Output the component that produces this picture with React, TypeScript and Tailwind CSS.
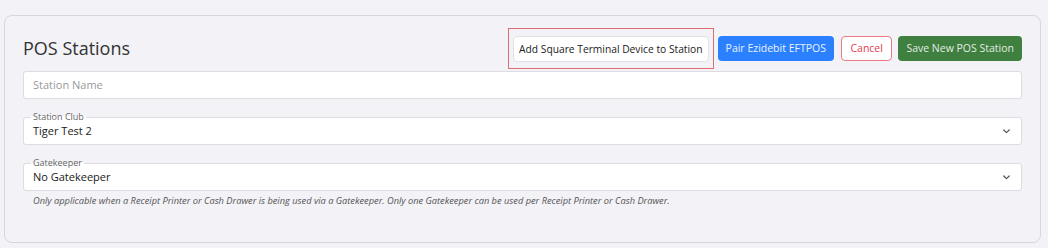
const ChevronDown = () => (
	<svg width="7" height="5" viewBox="0 0 7 5" fill="none" className="text-[#555]">
		<path d="M0.8 1l2.7 2.7L6.2 1" stroke="currentColor" strokeWidth="1.2" strokeLinecap="round" strokeLinejoin="round" />
	</svg>
);

const SelectField = ({ label, value }: { label: string; value: string }) => {
	return (
		<div className="relative">
			<span className="absolute -top-[6px] left-[8px] px-[2px] text-[9px] leading-[11px] text-[#666] bg-[linear-gradient(to_bottom,#f2f2f7_50%,#ffffff_50%)]">
				{label}
			</span>
			<div className="flex items-center justify-between h-[28px] pl-[9px] pr-[11px] bg-white border border-[#dcdce2] rounded-[3px]">
				<span className="text-[11px] text-[#1a1a1a]">{value}</span>
				<ChevronDown />
			</div>
		</div>
	);
};

const App = () => {
	return (
		<div className="w-[1048px] h-[248px] bg-[#f2f2f7] pt-[15px] pl-[4px] pr-[7px] font-['Open_Sans',sans-serif]">
			<div className="h-[228px] border border-[#d6d6dc] rounded-[8px] bg-[#f2f2f7] pl-[18px] pr-[18px]">
				<div className="flex items-center justify-between h-[55px] pt-[10px]">
					<h1 className="text-[18px] text-[#333]">POS Stations</h1>
					<div className="flex items-center">
						<div className="border border-[#e06c75] px-[4px] py-[6px]">
							<button className="h-[26px] px-[5px] text-[10.25px] text-[#222] bg-white border border-[#e2e2e6] rounded-[4px]">
								Add Square Terminal Device to Station
							</button>
						</div>
						<button className="ml-[4px] h-[25px] px-[8px] text-[10.5px] text-[#eaf2ff] bg-[#2a80ff] rounded-[4px]">
							Pair Ezidebit EFTPOS
						</button>
						<button className="ml-[7px] h-[25px] px-[8.5px] text-[10.5px] text-[#e0404e] bg-white border border-[#ec7a84] rounded-[4px]">
							Cancel
						</button>
						<button className="ml-[6px] h-[25px] px-[8px] text-[10.5px] text-[#e2ece2] bg-[#3f7f3f] rounded-[4px]">
							Save New POS Station
						</button>
					</div>
				</div>
				<div className="flex items-center h-[28px] pl-[9px] bg-white border border-[#dcdce2] rounded-[3px]">
					<span className="text-[11px] text-[#999]">Station Name</span>
				</div>
				<div className="mt-[18px]">
					<SelectField label="Station Club" value="Tiger Test 2" />
				</div>
				<div className="mt-[18px]">
					<SelectField label="Gatekeeper" value="No Gatekeeper" />
				</div>
				<p className="mt-[3px] pl-[10px] text-[9.25px] italic text-[#555]">
					Only applicable when a Receipt Printer or Cash Drawer is being used via a Gatekeeper. Only one Gatekeeper can be used per Receipt Printer or Cash Drawer.
				</p>
			</div>
		</div>
	);
};

export default App;
